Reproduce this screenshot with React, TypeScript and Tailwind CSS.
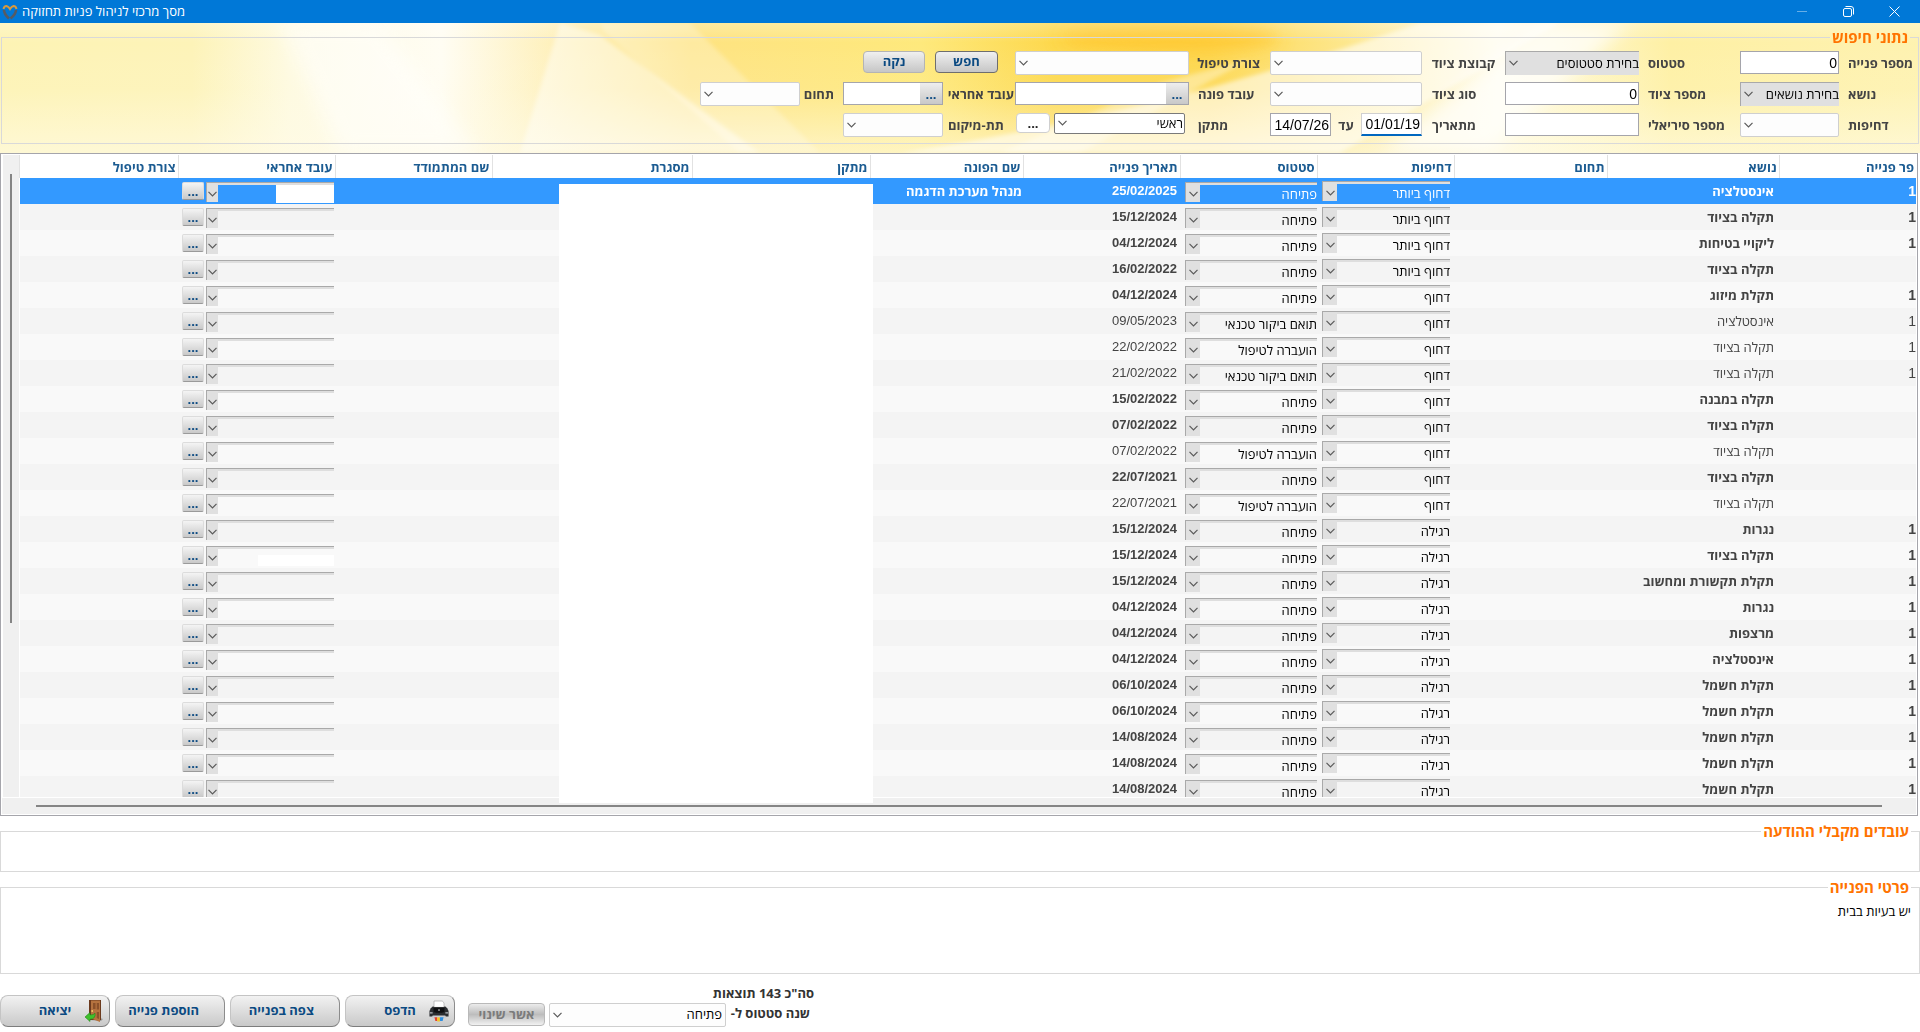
import type { ReactNode } from 'react';
import clsx from 'clsx';

interface Ticket {
  no: string;
  subject: string;
  urgency: string;
  status: string;
  date: string;
  caller?: string;
  read?: boolean; // already handled, drawn in regular weight
}

const TICKETS: Ticket[] = [
  { no: '1', subject: 'אינסטלציה', urgency: 'דחוף ביותר', status: 'פתיחה', date: '25/02/2025', caller: 'מנהל מערכת הדגמה' },
  { no: '1', subject: 'תקלה בציוד', urgency: 'דחוף ביותר', status: 'פתיחה', date: '15/12/2024' },
  { no: '1', subject: 'ליקויי בטיחות', urgency: 'דחוף ביותר', status: 'פתיחה', date: '04/12/2024' },
  { no: '', subject: 'תקלה בציוד', urgency: 'דחוף ביותר', status: 'פתיחה', date: '16/02/2022' },
  { no: '1', subject: 'תקלת מיזוג', urgency: 'דחוף', status: 'פתיחה', date: '04/12/2024' },
  { no: '1', subject: 'אינסטלציה', urgency: 'דחוף', status: 'תואם ביקור טכנאי', date: '09/05/2023', read: true },
  { no: '1', subject: 'תקלה בציוד', urgency: 'דחוף', status: 'הועברה לטיפול', date: '22/02/2022', read: true },
  { no: '1', subject: 'תקלה בציוד', urgency: 'דחוף', status: 'תואם ביקור טכנאי', date: '21/02/2022', read: true },
  { no: '', subject: 'תקלה במבנה', urgency: 'דחוף', status: 'פתיחה', date: '15/02/2022' },
  { no: '', subject: 'תקלה בציוד', urgency: 'דחוף', status: 'פתיחה', date: '07/02/2022' },
  { no: '', subject: 'תקלה בציוד', urgency: 'דחוף', status: 'הועברה לטיפול', date: '07/02/2022', read: true },
  { no: '', subject: 'תקלה בציוד', urgency: 'דחוף', status: 'פתיחה', date: '22/07/2021' },
  { no: '', subject: 'תקלה בציוד', urgency: 'דחוף', status: 'הועברה לטיפול', date: '22/07/2021', read: true },
  { no: '1', subject: 'נגרות', urgency: 'רגילה', status: 'פתיחה', date: '15/12/2024' },
  { no: '1', subject: 'תקלה בציוד', urgency: 'רגילה', status: 'פתיחה', date: '15/12/2024' },
  { no: '1', subject: 'תקלת תקשורת ומחשוב', urgency: 'רגילה', status: 'פתיחה', date: '15/12/2024' },
  { no: '1', subject: 'נגרות', urgency: 'רגילה', status: 'פתיחה', date: '04/12/2024' },
  { no: '1', subject: 'מרצפות', urgency: 'רגילה', status: 'פתיחה', date: '04/12/2024' },
  { no: '1', subject: 'אינסטלציה', urgency: 'רגילה', status: 'פתיחה', date: '04/12/2024' },
  { no: '1', subject: 'תקלת חשמל', urgency: 'רגילה', status: 'פתיחה', date: '06/10/2024' },
  { no: '1', subject: 'תקלת חשמל', urgency: 'רגילה', status: 'פתיחה', date: '06/10/2024' },
  { no: '1', subject: 'תקלת חשמל', urgency: 'רגילה', status: 'פתיחה', date: '14/08/2024' },
  { no: '1', subject: 'תקלת חשמל', urgency: 'רגילה', status: 'פתיחה', date: '14/08/2024' },
  { no: '1', subject: 'תקלת חשמל', urgency: 'רגילה', status: 'פתיחה', date: '14/08/2024' },
];

const COLUMNS: { title: string; width: string }[] = [
  { title: 'פר פנייה', width: 'w-[137px]' },
  { title: 'נושא', width: 'w-[172px]' },
  { title: 'תחום', width: 'w-[153px]' },
  { title: 'דחיפות', width: 'w-[137px]' },
  { title: 'סטטוס', width: 'w-[137px]' },
  { title: 'תאריך פנייה', width: 'w-[157px]' },
  { title: 'שם הפונה', width: 'w-[153px]' },
  { title: 'מתקן', width: 'w-[178px]' },
  { title: 'מסגרת', width: 'w-[200px]' },
  { title: 'שם המתמודד', width: 'w-[157px]' },
  { title: 'עובד אחראי', width: 'w-[157px]' },
  { title: 'צורת טיפול', width: '' },
];

function Chevron({ className }: { className?: string }) {
  return (
    <svg viewBox="0 0 9 6" className={clsx('pointer-events-none w-[9px] h-[6px]', className)} fill="none" stroke="#5a5a5a" strokeWidth="1.2">
      <path d="M0.5 0.8 L4.5 4.8 L8.5 0.8" />
    </svg>
  );
}

// ── Form controls ─────────────────────────────────────────────────────────
function Select({ id, value = '', tone = 'light', className }: { id: string; value?: string; tone?: 'light' | 'grey' | 'dark'; className?: string }) {
  return (
    <div className={clsx('relative', className ?? 'w-full')}>
      <select
        id={id}
        defaultValue={value}
        className={clsx(
          'block w-full appearance-none pl-5 text-[13px] text-black',
          tone === 'light' && 'h-6 pr-[3px] bg-[#fdfdfd] border border-[#cfcfcf] rounded-xs',
          tone === 'grey' && 'h-6 bg-[#e0e0e0] border-t border-l border-[#a9a9a9]',
          tone === 'dark' && 'h-[21px] pr-px bg-white border border-[#7a7a7a] rounded-xs',
        )}
      >
        <option value={value}>{value}</option>
      </select>
      <Chevron className={clsx('absolute left-1', tone === 'dark' ? 'top-[7px]' : 'top-[9px]')} />
    </div>
  );
}

function TextBox({ id, value = '', active }: { id: string; value?: string; active?: boolean }) {
  return (
    <input
      id={id}
      type="text"
      dir="ltr"
      defaultValue={value}
      className={clsx(
        "w-full min-w-0 h-[23px] bg-white border px-px text-right text-sm text-black outline-none font-['Liberation_Sans',sans-serif]",
        active ? 'border-[#d0d0d0] border-b-2 border-b-[#0067c0]' : 'border-[#a5a5ab]',
      )}
    />
  );
}

function PickerBox({ id, label }: { id: string; label: string }) {
  return (
    <div className="flex h-[23px] min-w-0 flex-1 border border-[#a5a5ab] bg-white">
      <button type="button" aria-label={label} className="w-[22px] shrink-0 bg-linear-to-b from-[#eeeeee] to-[#c8c8c8] text-[13px] leading-4 font-bold text-[#0b4a82]">
        ...
      </button>
      <input id={id} type="text" className="w-full min-w-0 outline-none" />
    </div>
  );
}

function Field({ id, label, labelClass, children }: { id: string; label: string; labelClass: string; children: ReactNode }) {
  return (
    <div className="flex h-6">
      <label htmlFor={id} className={clsx('shrink-0 text-left leading-6 font-bold whitespace-nowrap text-[#444]', labelClass)}>
        {label}
      </label>
      {children}
    </div>
  );
}

function GroupBox({ title, className, children }: { title: string; className?: string; children?: ReactNode }) {
  return (
    <fieldset className={clsx('relative min-w-0 border border-[#d9d9d9]', className)}>
      <legend className="mr-2 h-5 px-[2px] text-[15px] leading-5 font-bold text-[#ff7300]">{title}</legend>
      {children}
    </fieldset>
  );
}

function SearchBackdrop() {
  return (
    <svg className="absolute inset-0 h-full w-full" viewBox="0 0 1920 130" preserveAspectRatio="none">
      <defs>
        <linearGradient id="base" x1="0" x2="1" y1="0" y2="0">
          <stop offset="0" stopColor="#fdf3b4" />
          <stop offset="0.1" stopColor="#fdf3b8" />
          <stop offset="0.15" stopColor="#fefae0" />
          <stop offset="0.23" stopColor="#fffdf3" />
          <stop offset="0.3" stopColor="#feeeb0" />
          <stop offset="0.36" stopColor="#fee381" />
          <stop offset="0.48" stopColor="#fee97c" />
          <stop offset="0.55" stopColor="#fdd84c" />
          <stop offset="0.63" stopColor="#fdd74e" />
          <stop offset="0.7" stopColor="#fde78c" />
          <stop offset="0.78" stopColor="#fffbe4" />
          <stop offset="0.87" stopColor="#fef0a4" />
          <stop offset="1" stopColor="#fef2b0" />
        </linearGradient>
        <linearGradient id="fade" x1="0" x2="0" y1="0" y2="1">
          <stop offset="0" stopColor="#fff" stopOpacity="0.25" />
          <stop offset="0.15" stopColor="#fff" stopOpacity="0" />
          <stop offset="0.5" stopColor="#fffbe6" stopOpacity="0.1" />
          <stop offset="1" stopColor="#fffbe6" stopOpacity="0.65" />
        </linearGradient>
        <filter id="soft" x="-20%" y="-50%" width="140%" height="200%">
          <feGaussianBlur stdDeviation="9" />
        </filter>
        <filter id="edge" x="-10%" y="-10%" width="120%" height="120%">
          <feGaussianBlur stdDeviation="2" />
        </filter>
      </defs>
      <rect width="1920" height="130" fill="url(#base)" />
      <ellipse cx="1170" cy="14" rx="110" ry="16" fill="#ffc62e" opacity="0.75" filter="url(#soft)" />
      <rect width="1920" height="130" fill="url(#fade)" />
      <g filter="url(#edge)">
        <path d="M600 12 L760 130 L520 130 L560 0 Z" fill="#fff" opacity="0.45" />
        <path d="M690 0 L820 130 L740 130 L605 10 L600 0 Z" fill="#fff" opacity="0.25" />
        <path d="M1420 0 L1560 0 L1340 130 L900 130 Q1160 90 1420 0 Z" fill="#fff" opacity="0.55" />
        <path d="M1160 60 L1250 36 L1080 130 L1000 130 Z" fill="#fff" opacity="0.35" />
      </g>
      <path d="M280 0 L380 0 L480 130 L340 130 Z" fill="#fff" opacity="0.5" filter="url(#soft)" />
      <path d="M1540 0 L1630 0 L1490 130 L1380 130 Z" fill="#fff" opacity="0.7" filter="url(#soft)" />
    </svg>
  );
}

// ── Search panel ──────────────────────────────────────────────────────────
function SearchPanel() {
  return (
    <section className="relative px-px pt-1 pb-[9px]">
      <SearchBackdrop />
      <GroupBox title="נתוני חיפוש" className="flex">
        <div className="flex pt-1 pr-1 pb-[6px]">
          <div className="flex w-[174px] flex-col gap-[7px] ml-[10px]">
            <Field id="ticket-no" label="מספר פנייה" labelClass="w-[66px] ml-[9px]"><TextBox id="ticket-no" value="0" /></Field>
            <Field id="subject" label="נושא" labelClass="w-[66px] ml-[9px]"><Select id="subject" value="בחירת נושאים" tone="grey" /></Field>
            <Field id="urgency" label="דחיפות" labelClass="w-[66px] ml-[9px]"><Select id="urgency" /></Field>
          </div>
          <div className="flex w-[225px] flex-col gap-[7px] ml-[10px]">
            <Field id="status" label="סטטוס" labelClass="w-[82px] ml-[9px]"><Select id="status" value="בחירת סטטוסים" tone="grey" /></Field>
            <Field id="device-no" label="מספר ציוד" labelClass="w-[82px] ml-[9px]"><TextBox id="device-no" value="0" /></Field>
            <Field id="serial" label="מספר סיריאלי" labelClass="w-[82px] ml-[9px]"><TextBox id="serial" /></Field>
          </div>
          <div className="flex w-[225px] flex-col gap-[7px] ml-[10px]">
            <Field id="device-group" label="קבוצת ציוד" labelClass="w-[63px] ml-[10px]"><Select id="device-group" /></Field>
            <Field id="device-type" label="סוג ציוד" labelClass="w-[63px] ml-[10px]"><Select id="device-type" /></Field>
            <Field id="date-from" label="מתאריך" labelClass="w-[63px] ml-[10px]">
              <TextBox id="date-from" value="01/01/19" active />
              <label htmlFor="date-to" className="w-[30px] shrink-0 text-center leading-6 font-bold text-[#444]">עד</label>
              <TextBox id="date-to" value="14/07/26" />
            </Field>
          </div>
          <div className="flex w-[245px] flex-col gap-[7px] ml-px">
            <Field id="care" label="צורת טיפול" labelClass="w-[62px] ml-[9px]"><Select id="care" /></Field>
            <Field id="caller" label="עובד פונה" labelClass="w-[62px] ml-[9px]"><PickerBox id="caller" label="בחירת עובד פונה" /></Field>
            <Field id="site" label="מתקן" labelClass="w-[62px] ml-[9px]">
              <Select id="site" value="ראשי" tone="dark" className="mr-1 w-[131px]" />
              <button type="button" aria-label="בחירת מתקן" className="mr-1 h-5 w-[34px] rounded-sm border border-[#cfcfcf] bg-white text-[13px] leading-4 font-bold text-[#222]">...</button>
            </Field>
          </div>
          <div className="flex w-[171px] flex-col gap-[7px] ml-[9px]">
            <div className="flex h-6 gap-2.5 pr-4">
              <button type="button" className="h-[22px] w-[63px] rounded-sm border border-[#6e6e6e] bg-linear-to-b from-[#f0f0f0] to-[#c6c6c6] font-bold text-[#0b4a82]">חפש</button>
              <button type="button" className="h-[22px] w-[62px] rounded-sm border border-[#b4b4b4] bg-linear-to-b from-[#f0f0f0] to-[#c6c6c6] font-bold text-[#0b4a82]">נקה</button>
            </div>
            <Field id="assignee" label="עובד אחראי" labelClass="w-[66px] ml-[5px]"><PickerBox id="assignee" label="בחירת עובד אחראי" /></Field>
            <Field id="sub-site" label="תת-מיקום" labelClass="w-[66px] ml-[5px]"><Select id="sub-site" /></Field>
          </div>
          <div className="w-[134px] pt-[31px]">
            <Field id="area" label="תחום" labelClass="w-[29px] ml-[5px]"><Select id="area" /></Field>
          </div>
        </div>
      </GroupBox>
    </section>
  );
}

// ── Tickets grid ──────────────────────────────────────────────────────────
function CellSelect({ label, value = '', selected, narrow }: { label: string; value?: string; selected?: boolean; narrow?: boolean }) {
  return (
    <div className="relative flex-1">
      <select
        aria-label={label}
        defaultValue={value}
        className={clsx(
          'block h-5 w-full appearance-none border-t border-[#a9a9a9] pt-[3px] pl-4 text-[13px] leading-4 shadow-[inset_0_2px_0_#dedede]',
          selected ? 'text-white' : 'text-black',
        )}
      >
        <option value={value}>{value}</option>
      </select>
      <span className={clsx('pointer-events-none absolute top-0 left-0 flex h-5 items-center justify-center border-t border-l border-[#a9a9a9] bg-[#e0e0e0] pt-0.5', narrow ? 'w-3' : 'w-[15px]')}>
        <Chevron />
      </span>
    </div>
  );
}

function TicketRow({ ticket, index }: { ticket: Ticket; index: number }) {
  const selected = index === 0;
  return (
    <tr
      className={clsx(
        'h-[26px] align-top leading-[26px]',
        selected ? 'bg-[#3399ff] text-white' : index % 2 ? 'bg-[#f4f4f4] text-[#444]' : 'bg-[#f9f9f9] text-[#444]',
        !ticket.read && 'font-bold',
      )}
    >
      <td className="font-['Liberation_Sans',sans-serif] text-sm leading-[26px]">{ticket.no}</td>
      <td className="pr-[5px] whitespace-nowrap">{ticket.subject}</td>
      <td />
      <td className="pt-[3px] pr-1 pl-[5px] font-normal">
        <div className="flex"><CellSelect label="דחיפות" value={ticket.urgency} selected={selected} /></div>
      </td>
      <td className="pt-1 pl-[5px] font-normal">
        <div className="flex"><CellSelect label="סטטוס" value={ticket.status} selected={selected} /></div>
      </td>
      <td className="pr-[3px] font-['Liberation_Sans',sans-serif] text-[13px] leading-[26px]">{ticket.date}</td>
      <td className="pr-px whitespace-nowrap">{ticket.caller}</td>
      <td />
      <td />
      <td />
      <td className="pt-1 pr-px pl-1 font-normal">
        <div className="relative flex gap-0.5">
          <CellSelect label="עובד אחראי" selected={selected} narrow />
          {selected && <span className="absolute top-[3px] right-0 h-[18px] w-[58px] bg-white" />}
          {index === 14 && <span className="absolute top-[9px] right-0 h-[11px] w-[76px] bg-white" />}
          <button type="button" aria-label="בחירת עובד" className="h-[18px] w-[22px] rounded-xs border border-[#dcdcdc] border-b-[#9a9a9a] bg-linear-to-b from-[#f4f4f4] to-[#c9c9c9] text-[13px] leading-4 font-bold text-[#0b4a82]">
            ...
          </button>
        </div>
      </td>
      <td />
    </tr>
  );
}

function TicketGrid() {
  return (
    <section className="relative mr-[2px] flex min-h-0 flex-1 flex-col border border-[#a5a5ab] bg-white p-px">
      <div className="flex min-h-0 flex-1">
        <div className="min-w-0 flex-1 overflow-hidden">
          <table className="w-full table-fixed border-collapse">
            <thead>
              <tr className="h-[23px]">
                {COLUMNS.map((col) => (
                  <th key={col.title} scope="col" className={clsx('border-l border-[#e2e2e2] pr-[2px] text-right leading-[22px] font-bold whitespace-nowrap text-[#1c5c92]', col.width)}>
                    {col.title}
                  </th>
                ))}
              </tr>
            </thead>
            <tbody>
              {TICKETS.map((ticket, i) => <TicketRow key={i} ticket={ticket} index={i} />)}
            </tbody>
          </table>
        </div>
        {/* Vertical scrollbar */}
        <div className="ml-px w-4 bg-[#f0f0f0] pt-[19px]">
          <div className="mx-auto h-[72%] w-0.5 bg-[#858585]" />
        </div>
      </div>
      {/* Horizontal scrollbar */}
      <div className="mt-px h-4 bg-[#f0f0f0] px-[34px] pt-[7px]">
        <div className="h-0.5 bg-[#858585]" />
      </div>
      {/* Hidden personal details */}
      <div className="absolute top-[30px] right-[1044px] bottom-[12px] w-[314px] bg-white" />
    </section>
  );
}

// ── Footer ────────────────────────────────────────────────────────────────
function DoorIcon() {
  return (
    <svg viewBox="0 0 20 24" className="h-6 w-5">
      <path d="M5 21 L17 22 L19 20 L16 19 Z" fill="#9a9a9a" />
      <path d="M5 1 H17 V21 H5 Z" fill="#6b3a1e" />
      <path d="M7 1.5 L16 1.5 L16 23 L7 19.5 Z" fill="#b5733f" />
      <path d="M9 4 H11.5 V10 H9 Z M12.8 4 H15 V10.5 H12.8 Z M12.8 13 H15 V20 L12.8 19 Z" fill="#8b512a" />
      <circle cx="8.2" cy="12" r="0.9" fill="#f3d36b" />
      <path d="M1 18 L6 13.5 V16 Q10 16 11 14 Q12 20 6 20.2 V22.5 Z" fill="#3fc02c" stroke="#23861a" strokeWidth="0.6" />
    </svg>
  );
}

function PrinterIcon() {
  return (
    <svg viewBox="0 0 22 24" className="h-6 w-5">
      <path d="M2 9 L4 7 H18 L20 9 L21.5 12 V18 H0.5 V12 Z" fill="#2b2d30" />
      <path d="M5.5 1 H14.5 L16.5 3 V8 H5.5 Z" fill="#fff" stroke="#a0a0a0" strokeWidth="0.7" />
      <path d="M5 8 H17 V13 Q11 15 5 13 Z" fill="#0f1012" />
      <path d="M1 14 H4 M18 14 H21" stroke="#b5b9bf" strokeWidth="1.4" />
      <path d="M4 17 H18 L19 20 H3 Z" fill="#c9ccd1" />
      <circle cx="11" cy="11" r="0.9" fill="#d9d9d9" />
      <path d="M6 19 H9 V23 H7 Z" fill="#e5402c" />
      <path d="M9 19 H12 V23.5 H9 Z" fill="#f7c51e" />
      <path d="M12 19 H16 L15 23 H12 Z" fill="#2f8fe0" />
    </svg>
  );
}

function FooterButton({ label, icon }: { label: string; icon?: ReactNode }) {
  return (
    <button type="button" className="grid h-8 w-[110px] grid-cols-[20px_1fr_20px] items-center rounded-lg border border-[#c4c4c4] border-r-[#8c8c8c] border-b-[#7d7d7d] bg-linear-to-b from-[#f2f2f2] to-[#c9c9c9] px-[5px] font-bold text-[#0b4a82]">
      {icon}
      <span className="col-start-2 justify-self-center whitespace-nowrap">{label}</span>
    </button>
  );
}

function Footer() {
  return (
    <footer className="flex h-[58px] shrink-0 items-end justify-end gap-[13px] pb-[5px]">
      <div className="flex w-[346px] flex-col">
        <p className="leading-5 font-bold text-[#333]">סה"כ 143 תוצאות</p>
        <div className="flex items-start">
          <label htmlFor="new-status" className="ml-1 w-[84px] pr-1 leading-5 font-bold whitespace-nowrap text-[#333]">שנה סטטוס ל-</label>
          <Select id="new-status" value="פתיחה" className="w-[177px]" />
          <button type="button" disabled className="mr-1 h-[23px] w-[77px] rounded-sm border border-[#b9b9b9] bg-linear-to-b from-[#ececec] via-[#bdbdbd] to-[#f2f2f2] font-bold text-[#7b7b7b]">
            אשר שינוי
          </button>
        </div>
      </div>
      <div className="flex gap-[5px]">
        <FooterButton label="הדפס" icon={<PrinterIcon />} />
        <FooterButton label="צפה בפנייה" />
        <FooterButton label="הוספת פנייה" />
        <FooterButton label="יציאה" icon={<DoorIcon />} />
      </div>
    </footer>
  );
}

function TitleBar() {
  return (
    <header dir="ltr" className="flex h-[23px] shrink-0 items-center bg-[#0078d7] text-white">
      <svg viewBox="0 0 16 16" className="ml-0.5 h-4 w-4" fill="none" strokeWidth="2">
        <path d="M2 6 Q2 10 7 14.5 M14 6 Q14 10 8.5 14.5" stroke="#565b63" strokeWidth="2.6" />
        <path d="M1.5 5 Q2 2 4.5 2 Q6.5 2.5 8 5 Q9.5 2.5 11.5 2 Q14 2 14.5 5" stroke="#d99a3c" />
      </svg>
      <h1 dir="rtl" className="ml-1 text-[13px]">מסך מרכזי לניהול פניות תחזוקה</h1>
      <div className="ml-auto flex items-center gap-[35px] pr-5">
        <button type="button" aria-label="מזעור" className="opacity-40">
          <svg viewBox="0 0 11 11" className="h-[11px] w-[11px]" stroke="#fff"><path d="M0 5.5 H10" /></svg>
        </button>
        <button type="button" aria-label="שחזור">
          <svg viewBox="0 0 11 11" className="h-[11px] w-[11px]" fill="none" stroke="#fff"><rect x="0.5" y="2.5" width="8" height="8" rx="1.5" /><path d="M2.5 0.5 H8 Q10.5 0.5 10.5 3 V8.5" /></svg>
        </button>
        <button type="button" aria-label="סגירה">
          <svg viewBox="0 0 11 11" className="h-[11px] w-[11px]" stroke="#fff"><path d="M0.5 0.5 L10.5 10.5 M10.5 0.5 L0.5 10.5" /></svg>
        </button>
      </div>
    </header>
  );
}

export default function App() {
  return (
    <div dir="rtl" className="flex h-screen flex-col bg-white font-['Open_Sans','DejaVu_Sans',sans-serif] text-[13px]">
      <TitleBar />
      <SearchPanel />
      <TicketGrid />
      <GroupBox title="עובדים מקבלי ההודעה" className="mt-[5px] h-[51px] shrink-0" />
      <GroupBox title="פרטי הפנייה" className="mt-[5px] h-[97px] shrink-0">
        <p className="pt-1 pr-2 leading-5 text-black">יש בעיות בבית</p>
      </GroupBox>
      <Footer />
    </div>
  );
}
